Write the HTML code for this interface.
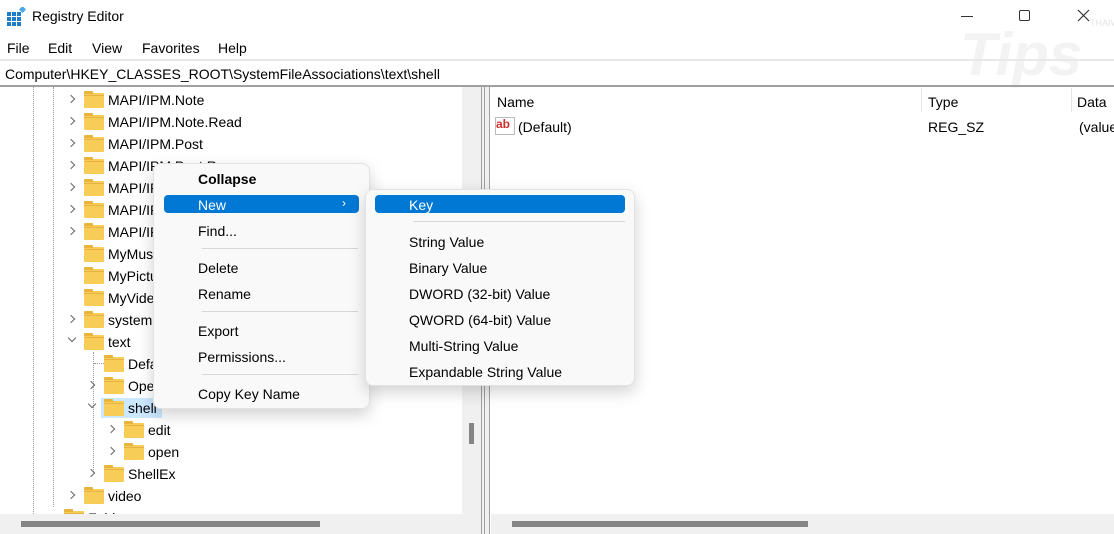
<!DOCTYPE html>
<html><head><style>
*{margin:0;padding:0;box-sizing:border-box}
body{width:1114px;height:534px;overflow:hidden;background:#fff;font-family:"Liberation Sans",sans-serif;font-size:14px;color:#000;position:relative}
.a{position:absolute;white-space:nowrap}
.f{position:absolute;width:20px;height:15px;background:#f8cd57;border-radius:1px}
.f:before{content:"";position:absolute;left:0;top:-2px;width:9px;height:3px;background:#e9b43c;border-radius:1px 1px 0 0}
.f:after{content:"";position:absolute;left:0;top:2px;width:20px;height:1px;background:#e6b342}
.ch{position:absolute;width:6px;height:6px;border-right:1.3px solid #666;border-bottom:1.3px solid #666}
.r{transform:rotate(-45deg)}.d{transform:rotate(45deg)}
.menu{position:absolute;background:#f9f9f9;border:1px solid #e2e2e2;border-radius:8px;box-shadow:0 6px 16px rgba(0,0,0,.18)}
.sep{position:absolute;height:1px;background:#d8d8d8}
.hl{position:absolute;background:#0078d4;border-radius:4px}
</style></head><body>
<!-- title -->
<svg class="a" style="left:7px;top:7px" width="20" height="20"><g fill="#1e7cc8"><rect x="0" y="5" width="4" height="4"/><rect x="5" y="5" width="4" height="4"/><rect x="10" y="5" width="4" height="4"/><rect x="0" y="10" width="4" height="4"/><rect x="5" y="10" width="4" height="4"/><rect x="10" y="10" width="4" height="4"/><rect x="0" y="15" width="4" height="4"/><rect x="5" y="15" width="4" height="4"/><rect x="10" y="15" width="4" height="4"/></g><rect x="13" y="0" width="5" height="5" fill="#4aa7e8" transform="rotate(45 15.5 2.5)"/></svg>
<div class="a" style="left:32px;top:8px;font-size:14px">Registry Editor</div>
<div class="a" style="left:960px;top:20px;font-size:60px;font-style:italic;font-weight:bold;color:rgba(235,235,235,.6)">Tips</div>
<div class="a" style="left:1090px;top:18px;font-size:9px;color:#e4e4e4">THAIWARE</div>
<div class="a" style="left:961px;top:16px;width:12px;height:1px;background:#333"></div>
<div class="a" style="left:1019px;top:10px;width:11px;height:11px;border:1px solid #333;border-radius:2px"></div>
<svg class="a" style="left:1077px;top:9px" width="13" height="13"><path d="M1 1L12 12M12 1L1 12" stroke="#333" stroke-width="1.2"/></svg>
<!-- menu bar -->
<div class="a" style="left:7px;top:40px">File</div>
<div class="a" style="left:48px;top:40px">Edit</div>
<div class="a" style="left:92px;top:40px">View</div>
<div class="a" style="left:142px;top:40px">Favorites</div>
<div class="a" style="left:218px;top:40px">Help</div>
<div class="a" style="left:0;top:59px;width:1114px;height:2px;background:#e8e8e8"></div>
<div class="a" style="left:5px;top:66px">Computer\HKEY_CLASSES_ROOT\SystemFileAssociations\text\shell</div>
<div class="a" style="left:0;top:85px;width:1114px;height:2px;background:#a0a0a0"></div>
<!-- tree -->
<div class="a" style="left:33px;top:87px;height:427px;border-left:1px dotted #999"></div>
<div class="a" style="left:53px;top:87px;height:420px;border-left:1px dotted #999"></div>
<div class="a" style="left:93px;top:352px;height:120px;border-left:1px dotted #999"></div>
<div class="a" style="left:101px;top:398px;width:61px;height:20px;background:#cce8ff"></div>
<div id="tree"></div>
<!-- left scrollbar -->
<div class="a" style="left:462px;top:87px;width:19px;height:427px;background:#f0f0f0"></div>
<div class="a" style="left:469px;top:423px;width:5px;height:21px;background:#858585"></div>
<div class="a" style="left:0;top:514px;width:481px;height:20px;background:#f0f0f0"></div>
<div class="a" style="left:21px;top:521px;width:299px;height:6px;background:#858585"></div>
<!-- splitter -->
<div class="a" style="left:481px;top:87px;width:9px;height:447px;background:#f0f0f0;border-left:1px solid #a0a0a0;border-right:1px solid #a0a0a0"></div>
<div class="a" style="left:484px;top:87px;width:1px;height:447px;background:#a0a0a0"></div>
<!-- right pane -->
<div class="a" style="left:497px;top:94px">Name</div>
<div class="a" style="left:921px;top:88px;width:1px;height:24px;background:#e5e5e5"></div>
<div class="a" style="left:928px;top:94px">Type</div>
<div class="a" style="left:1071px;top:88px;width:1px;height:24px;background:#e5e5e5"></div>
<div class="a" style="left:1077px;top:94px">Data</div>
<div class="a" style="left:495px;top:117px;width:20px;height:18px;border:1px solid #bbb;background:#fff"></div>
<div class="a" style="left:496px;top:117px;font-size:12px;font-weight:bold;color:#d0312d">ab</div>
<div class="a" style="left:518px;top:119px">(Default)</div>
<div class="a" style="left:928px;top:119px">REG_SZ</div>
<div class="a" style="left:1079px;top:119px">(value</div>
<div class="a" style="left:491px;top:514px;width:623px;height:20px;background:#f0f0f0"></div>
<div class="a" style="left:512px;top:521px;width:296px;height:6px;background:#858585"></div>
<!-- context menu -->
<div class="menu" style="left:153px;top:163px;width:217px;height:246px"></div>
<div class="a" style="left:198px;top:171px;font-weight:bold">Collapse</div>
<div class="hl" style="left:164px;top:195px;width:195px;height:18px"></div>
<div class="a" style="left:198px;top:197px;color:#fff">New</div>
<div class="a" style="left:342px;top:196px;color:#fff;font-size:12px">›</div>
<div class="a" style="left:198px;top:223px">Find...</div>
<div class="sep" style="left:202px;top:248px;width:156px"></div>
<div class="a" style="left:198px;top:260px">Delete</div>
<div class="a" style="left:198px;top:286px">Rename</div>
<div class="sep" style="left:202px;top:311px;width:156px"></div>
<div class="a" style="left:198px;top:323px">Export</div>
<div class="a" style="left:198px;top:349px">Permissions...</div>
<div class="sep" style="left:202px;top:374px;width:156px"></div>
<div class="a" style="left:198px;top:386px">Copy Key Name</div>
<!-- submenu -->
<div class="menu" style="left:365px;top:189px;width:270px;height:197px"></div>
<div class="hl" style="left:375px;top:195px;width:250px;height:18px"></div>
<div class="a" style="left:409px;top:197px;color:#fff">Key</div>
<div class="sep" style="left:413px;top:221px;width:212px"></div>
<div class="a" style="left:409px;top:234px">String Value</div>
<div class="a" style="left:409px;top:260px">Binary Value</div>
<div class="a" style="left:409px;top:286px">DWORD (32-bit) Value</div>
<div class="a" style="left:409px;top:312px">QWORD (64-bit) Value</div>
<div class="a" style="left:409px;top:338px">Multi-String Value</div>
<div class="a" style="left:409px;top:364px">Expandable String Value</div>
<script>
var rows=[[1,'r','MAPI/IPM.Note'],[1,'r','MAPI/IPM.Note.Read'],[1,'r','MAPI/IPM.Post'],[1,'r','MAPI/IPM.Post.Re'],[1,'r','MAPI/IPM'],[1,'r','MAPI/IPM'],[1,'r','MAPI/IPM'],[1,'','MyMusic'],[1,'','MyPictures'],[1,'','MyVideo'],[1,'r','system'],[1,'d','text'],[2,'','Default'],[2,'r','Open'],[2,'d','shell'],[3,'r','edit'],[3,'r','open'],[2,'r','ShellEx'],[1,'r','video'],[0,'','Folder']];
var h='';rows.forEach(function(r,i){var y=88+i*22,x=r[0]==0?44:r[0]==1?64:r[0]==2?84:104;
if(r[1]=='r')h+='<div class="ch r" style="left:'+(x+4)+'px;top:'+(y+8)+'px"></div>';
if(r[1]=='d')h+='<div class="ch d" style="left:'+(x+5)+'px;top:'+(y+5)+'px"></div>';
if(r[0]==2&&r[1]=='')h+='<div class="a" style="left:94px;top:'+(y+11)+'px;width:10px;border-top:1px dotted #999"></div>';
h+='<div class="f" style="left:'+(x+20)+'px;top:'+(y+5)+'px"></div><div class="a" style="left:'+(x+44)+'px;top:'+(y+4)+'px">'+r[2]+'</div>';});
document.getElementById('tree').innerHTML=h;
</script>
</body></html>
